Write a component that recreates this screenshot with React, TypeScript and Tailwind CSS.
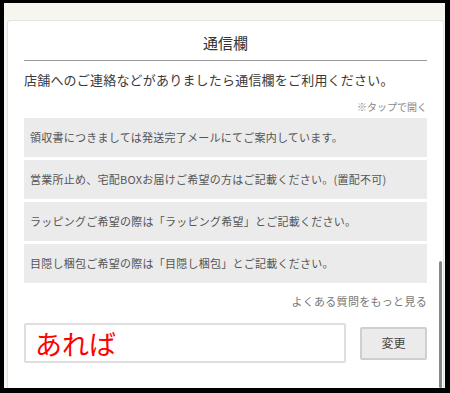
const notes = [
  "領収書につきましては発送完了メールにてご案内しています。",
  "営業所止め、宅配BOXお届けご希望の方はご記載ください。(置配不可)",
  "ラッピングご希望の際は「ラッピング希望」とご記載ください。",
  "目隠し梱包ご希望の際は「目隠し梱包」とご記載ください。",
];

export default function App() {
  return (
    <div
      className="h-[393px] w-[450px] overflow-hidden bg-black pb-[5px] pl-[4px] pr-[5px] pt-[3px]"
      style={{ fontFamily: '"Noto Sans CJK JP", "Noto Sans", sans-serif' }}
    >
      <div className="flex h-full flex-col bg-[#f7f5f0] pl-[3px] pr-[1px] pt-[17px]">
        {/* Card */}
        <div className="relative flex-1 rounded-t-[3px] border border-b-0 border-[#e6e3dc] bg-white px-[16px] pt-[12px]">
          {/* Title */}
          <h2 className="text-center text-[15px] leading-[20px] text-[#333]">通信欄</h2>
          <div className="mt-[7px] h-px bg-[#9a9a9a]" />

          <p className="mt-[9px] whitespace-nowrap text-[13px] leading-[20px] tracking-[0.2px] text-[#3a3a3a]">
            店舗へのご連絡などがありましたら通信欄をご利用ください。
          </p>

          <p className="mt-[10px] text-right text-[10px] leading-[14px] text-[#888]">※タップで開く</p>

          {/* FAQ list */}
          <div className="mt-[4px] flex flex-col gap-[3px]">
            {notes.map((note) => (
              <div
                key={note}
                className="flex h-[39px] items-center whitespace-nowrap bg-[#ebebeb] px-[6px] text-[11px] tracking-[0.25px] text-[#555]"
              >
                {note}
              </div>
            ))}
          </div>

          <p className="mt-[10px] text-right text-[11px] leading-[16px] tracking-[0.3px] text-[#777]">
            よくある質問をもっと見る
          </p>

          {/* Input row */}
          <div className="mt-[14px] flex items-center gap-[14px]">
            <div className="flex h-[40px] w-[322px] items-center rounded-[2px] border-2 border-[#dedede] px-[9px] text-[27px] leading-none text-[#ff0000]">
              あれば
            </div>
            <button className="h-[33px] w-[67px] rounded-[2px] border-2 border-[#cfcfcf] bg-[#ebebeb] text-[12px] text-[#444]">
              変更
            </button>
          </div>

          {/* Scrollbar */}
          <div className="absolute bottom-0 right-[1px] top-[240px] w-[3px] rounded-full bg-[#888]" />
        </div>
      </div>
    </div>
  );
}
